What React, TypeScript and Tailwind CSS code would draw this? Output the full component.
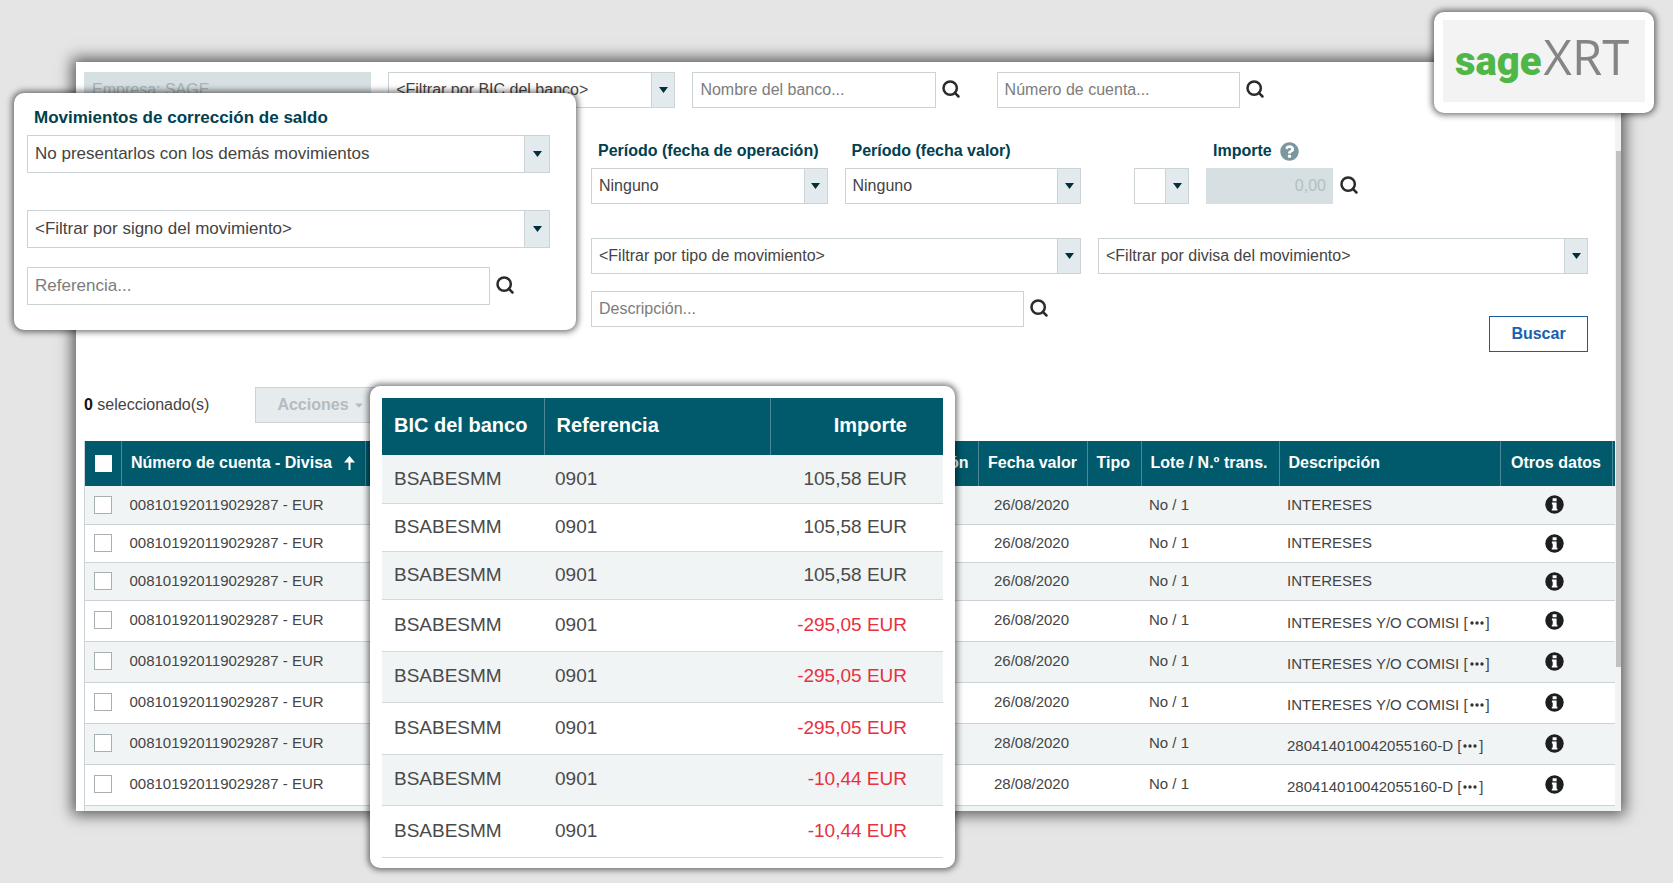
import React from "react";
import { clsx } from "clsx";
import { Search } from "lucide-react";
import { FaCaretDown, FaQuestionCircle } from "react-icons/fa";

const MOVEMENTS = [
  { date: "26/08/2020", amount: "105,58 EUR", description: "INTERESES" },
  { date: "26/08/2020", amount: "105,58 EUR", description: "INTERESES" },
  { date: "26/08/2020", amount: "105,58 EUR", description: "INTERESES" },
  { date: "26/08/2020", amount: "-295,05 EUR", description: "INTERESES Y/O COMISI", more: true },
  { date: "26/08/2020", amount: "-295,05 EUR", description: "INTERESES Y/O COMISI", more: true },
  { date: "26/08/2020", amount: "-295,05 EUR", description: "INTERESES Y/O COMISI", more: true },
  { date: "28/08/2020", amount: "-10,44 EUR", description: "280414010042055160-D", more: true },
  { date: "28/08/2020", amount: "-10,44 EUR", description: "280414010042055160-D", more: true },
];

const ACCOUNT = "008101920119029287 - EUR";

interface SelectBoxProps {
  id: string;
  label?: string;
  value: string;
  large?: boolean;
  className?: string;
}

const SelectBox: React.FC<SelectBoxProps> = ({ id, label, value, large, className }) => (
  <div className={clsx("relative", className)}>
    <select
      id={id}
      aria-label={label}
      className={clsx(
        "block w-full appearance-none rounded-none border border-[#ccd3d6] bg-white pl-[7px] pr-7 pb-px text-[#444] outline-none",
        large ? "h-[38px] text-[17px]" : "h-9 text-base"
      )}
    >
      <option>{value}</option>
    </select>
    {/* Drop-down handle */}
    <span
      className={clsx(
        "pointer-events-none absolute inset-y-0 right-0 flex items-center justify-center border border-[#ccd3d6] bg-[#e2eaed]",
        large ? "w-[26px]" : "w-6"
      )}
    >
      <svg width="9" height="6" viewBox="0 0 9 6" fill="#00303d">
        <path d="M0 0h9L4.5 6z" />
      </svg>
    </span>
  </div>
);

interface SearchBoxProps {
  label: string;
  placeholder: string;
  large?: boolean;
  className?: string;
}

const SearchButton = () => (
  <button type="button" aria-label="Buscar" className="shrink-0 pb-[2px] text-[#2b2b2b]">
    <Search size={20} strokeWidth={3} />
  </button>
);

const SearchBox: React.FC<SearchBoxProps> = ({ label, placeholder, large, className }) => (
  <div className={clsx("flex items-center gap-[5px]", className)}>
    <input
      type="text"
      aria-label={label}
      placeholder={placeholder}
      className={clsx(
        "min-w-0 flex-1 border border-[#ccd3d6] bg-white px-[7px] outline-none placeholder:text-[#7c7c7c]",
        large ? "h-[38px] text-[17px]" : "h-9 text-base"
      )}
    />
    <SearchButton />
  </div>
);

const LABEL = "block whitespace-nowrap text-base leading-6 font-bold text-[#00404f]";

const Filters = () => (
  <form className="pl-2 pr-[27px] pt-[10px]">
    <div className="grid grid-cols-5 gap-x-[17px]">
      <input
        type="text"
        aria-label="Empresa"
        disabled
        value="Empresa: SAGE"
        className="h-9 min-w-0 bg-[#d6dfe2] px-2 text-base text-[#a9b4b8]"
      />
      <SelectBox id="bic" label="BIC del banco" value="<Filtrar por BIC del banco>" />
      <SearchBox label="Nombre del banco" placeholder="Nombre del banco..." className="pr-[19px]" />
      <SearchBox label="Número de cuenta" placeholder="Número de cuenta..." className="pr-[19px]" />
    </div>

    <div className="mt-[31px] grid grid-cols-6 gap-x-[17px]">
      <div className="col-start-3">
        <label htmlFor="op-date" className={clsx(LABEL, "pb-[5px] pl-[7px]")}>
          Período (fecha de operación)
        </label>
        <SelectBox id="op-date" value="Ninguno" />
      </div>
      <div>
        <label htmlFor="value-date" className={clsx(LABEL, "pb-[5px] pl-[7px]")}>
          Período (fecha valor)
        </label>
        <SelectBox id="value-date" value="Ninguno" />
      </div>
      <div className="col-span-2 flex items-end gap-[17px] pl-9">
        <SelectBox id="operator" label="Operador" value="" className="w-[55px]" />
        <div>
          <div className="flex items-center gap-2 pb-[5px] pl-[7px]">
            <label htmlFor="amount" className={LABEL}>
              Importe
            </label>
            <FaQuestionCircle size={19} className="text-[#7a979f]" />
          </div>
          <div className="flex items-center gap-[6px]">
            <input
              id="amount"
              type="text"
              disabled
              value="0,00"
              className="h-9 w-[127px] bg-[#d6dfe2] px-[7px] text-right text-base text-[#b4bec2]"
            />
            <SearchButton />
          </div>
        </div>
      </div>
    </div>

    <div className="mt-[34px] grid grid-cols-6 gap-x-[17px]">
      <SelectBox id="type" label="Tipo de movimiento" value="<Filtrar por tipo de movimiento>" className="col-span-2 col-start-3" />
      <SelectBox id="currency" label="Divisa" value="<Filtrar por divisa del movimiento>" className="col-span-2" />
    </div>

    <div className="mt-[17px] grid grid-cols-6 items-start gap-x-[17px]">
      <SearchBox label="Descripción" placeholder="Descripción..." className="col-span-2 col-start-3 pr-8" />
      <div className="col-span-2 flex justify-end pt-[25px]">
        <button type="button" className="h-9 w-[99px] border border-[#1c5c9c] bg-white text-base font-bold text-[#1a5fae]">
          Buscar
        </button>
      </div>
    </div>
  </form>
);

const HEAD_CELL = "border-r border-[#4b8794] px-[9px] pb-[2px] whitespace-nowrap";

const InfoIcon = () => (
  <svg width="19" height="19" viewBox="0 0 19 19" role="img" aria-label="Información" className="mx-auto block">
    <circle cx="9.5" cy="9.5" r="9.2" fill="#1c1f20" />
    <path fill="#fff" d="M7.6 3.2h4v3h-4zM6.9 7.6h4.7v6.2h.8v1.8H6.8v-1.8h.9V9.4h-.8z" />
  </svg>
);

const MovementsTable = () => (
  <table className="w-full table-fixed border-collapse border-l border-[#ccd3d6] text-[15px] text-[#444]">
    <thead>
      <tr className="h-[45px] bg-[#005a6b] text-left text-base text-white">
        <th className="w-[37px] border-r border-[#4b8794]">
          <input type="checkbox" aria-label="Seleccionar todo" className="mx-auto block size-[17px] appearance-none bg-white" />
        </th>
        <th className={clsx(HEAD_CELL, "w-[244px]")}>
          <span className="flex items-center gap-3">
            Número de cuenta - Divisa
            <svg width="11" height="14" viewBox="0 0 11 14" fill="#fff">
              <path d="M5.5 0L11 6.5H6.5V14H4.5V6.5H0z" />
            </svg>
          </span>
        </th>
        <th className={HEAD_CELL} />
        <th className={clsx(HEAD_CELL, "w-[150px] text-right")}>Fecha operación</th>
        <th className={clsx(HEAD_CELL, "w-[109px] text-center")}>Fecha valor</th>
        <th className={clsx(HEAD_CELL, "w-[54px]")}>Tipo</th>
        <th className={clsx(HEAD_CELL, "w-[138px]")}>Lote / N.º trans.</th>
        <th className={clsx(HEAD_CELL, "w-[221px]")}>Descripción</th>
        <th className={clsx(HEAD_CELL, "w-[112px] text-center")}>Otros datos</th>
        <th className="w-[3px]" />
      </tr>
    </thead>
    <tbody>
      {MOVEMENTS.map((row, index) => (
        <tr
          key={index}
          className={clsx(
            "border-b border-[#ccd3d6] odd:bg-[#f0f4f5]",
            row.more ? "h-[41px] [&>td]:pb-px" : "h-[38px]"
          )}
        >
          <td>
            <input
              type="checkbox"
              aria-label={`Seleccionar movimiento ${index + 1}`}
              className="mx-auto block size-[18px] appearance-none border border-[#a9b0b3] bg-white"
            />
          </td>
          <td className="px-2">{ACCOUNT}</td>
          <td />
          <td />
          <td className="pr-[10px] pl-2 text-center">{row.date}</td>
          <td />
          <td className="px-2">No / 1</td>
          <td className={clsx("px-2 whitespace-nowrap", row.more && "pt-[6px]")}>
            {row.description}
            {row.more && (
              <>
                {" ["}
                <button type="button" aria-label="Ver más" className="px-[2px]">
                  <svg width="14" height="4" viewBox="0 0 14 4" fill="#333" className="mb-px inline-block">
                    <circle cx="2" cy="2" r="1.7" />
                    <circle cx="7" cy="2" r="1.7" />
                    <circle cx="12" cy="2" r="1.7" />
                  </svg>
                </button>
                {"]"}
              </>
            )}
          </td>
          <td className="pr-[3px]">
            <InfoIcon />
          </td>
          <td />
        </tr>
      ))}
      <tr className="h-[41px] bg-[#f0f4f5]">
        <td colSpan={10} />
      </tr>
    </tbody>
  </table>
);

const BalanceCard = () => (
  <section className="absolute left-[14px] top-[93px] w-[562px] rounded-[10px] bg-white px-[13px] pb-[25px] pt-[7px] shadow-[0_0_6px_2px_rgba(0,0,0,0.55)]">
    <label htmlFor="balance" className="block pl-[7px] text-[17px] leading-[35px] font-bold text-[#00404f]">
      Movimientos de corrección de saldo
    </label>
    <div className="pr-[13px]">
      <SelectBox id="balance" value="No presentarlos con los demás movimientos" large />
      <SelectBox id="sign" label="Signo del movimiento" value="<Filtrar por signo del movimiento>" large className="mt-[37px]" />
      <SearchBox label="Referencia" placeholder="Referencia..." large className="mt-[19px] pr-[35px]" />
    </div>
  </section>
);

const DetailCard = () => (
  <section className="absolute left-[370px] top-[386px] w-[585px] rounded-[10px] bg-white px-3 pb-[10px] pt-3 shadow-[0_0_6px_2px_rgba(0,0,0,0.55)]">
    <table className="w-full table-fixed border-collapse text-[19px] text-[#4a4a4a]">
      <thead>
        <tr className="h-[57px] bg-[#005a6b] text-left text-xl text-white">
          <th className="w-[162px] border-r border-[#4b8794] px-3 pb-[3px] whitespace-nowrap">BIC del banco</th>
          <th className="border-r border-[#4b8794] px-3 pb-[3px]">Referencia</th>
          <th className="w-[173px] pr-9 pb-[3px] text-right">Importe</th>
        </tr>
      </thead>
      <tbody>
        {MOVEMENTS.map((row, index) => (
          <tr
            key={index}
            className={clsx(
              "border-b border-[#d3d9db] odd:bg-[#f0f4f5]",
              row.more ? "h-[51px] even:h-[52px]" : "h-12"
            )}
          >
            <td className="px-3">BSABESMM</td>
            <td className="px-[11px]">0901</td>
            <td className={clsx("pr-9 text-right whitespace-nowrap", row.amount.startsWith("-") && "text-[#e8303f]")}>
              {row.amount}
            </td>
          </tr>
        ))}
      </tbody>
    </table>
  </section>
);

const LogoCard = () => (
  <div className="absolute right-[19px] top-3 rounded-[10px] bg-white px-[9px] pb-[11px] pt-2 shadow-[0_0_6px_2px_rgba(0,0,0,0.55)]">
    <div className="flex h-[82px] w-[202px] items-baseline gap-[2px] bg-[#f3f3f3] pl-3">
      <span className="font-[Roboto] text-[40px] leading-[72px] font-black text-[#4fb748]">sage</span>
      <span className="font-['Open_Sans'] text-[49px] leading-[72px] text-[#858585]">XRT</span>
    </div>
  </div>
);

const App: React.FC = () => {
  return (
    <div className="relative h-screen min-h-[883px] overflow-hidden bg-[#e5e5e5] pb-[72px] pl-[76px] pr-[52px] pt-[62px] font-['Liberation_Sans',Arial,sans-serif]">
      <main className="flex h-full bg-white shadow-[0_0_14px_4px_rgba(0,0,0,0.6)]">
        <div className="min-w-0 flex-1 overflow-hidden">
          <Filters />
          <div className="mt-[35px] flex items-center gap-[46px] pl-2">
            <p className="pb-px text-base text-[#444]">
              <b className="text-[#111]">0</b> seleccionado(s)
            </p>
            <button
              type="button"
              disabled
              className="flex h-9 items-center gap-1 border border-[#ccd3d6] bg-[#e6ebed] px-[21px] text-base font-bold text-[#b3bcc0]"
            >
              Acciones
              <FaCaretDown size={12} />
            </button>
          </div>
          <div className="mt-[18px] pl-2">
            <MovementsTable />
          </div>
        </div>
        {/* Scrollbar */}
        <div className="w-[6px] bg-[#f3f3f3] pl-px pt-[89px]">
          <div className="h-[516px] bg-[#c1c1c1]" />
        </div>
      </main>

      <BalanceCard />
      <DetailCard />
      <LogoCard />
    </div>
  );
};

export default App;
